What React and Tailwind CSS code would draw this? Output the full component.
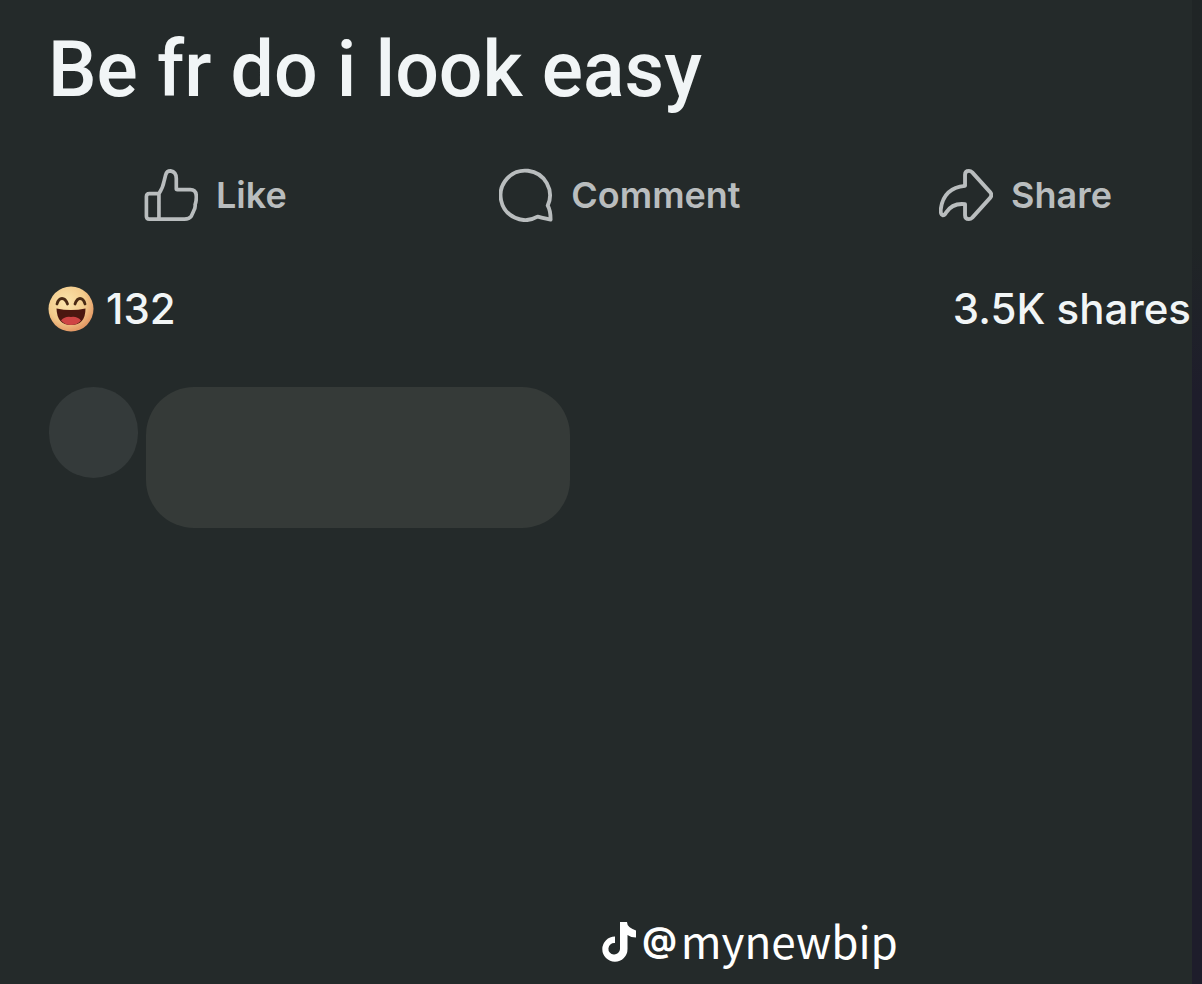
import React from 'react';

const LikeIcon = () => (
  <svg viewBox="0 0 56 56" className="w-[54px] h-[54px] shrink-0" fill="none" stroke="currentColor" strokeWidth="3.8" strokeLinejoin="round" strokeLinecap="round" aria-hidden="true">
    <path d="M15.5 26.500H5.500Q2.500 26.500 2.500 29.500V50Q2.500 53 5.500 53H42Q47 53 49 50L51.500 44.500Q53.500 41 53 38Q54.500 34 54.200 29Q54 22.500 48 22.500H34.500Q33.500 22.500 33.500 21.500V11Q33.500 4 27.500 3Q23.500 3 22.500 7L21 13Q19.500 21 15.500 26.500V53" />
  </svg>
);

const CommentIcon = () => (
  <svg viewBox="0 0 56 56" className="w-[54px] h-[54px] shrink-0" fill="none" stroke="currentColor" strokeWidth="4" strokeLinejoin="round" aria-hidden="true">
    <path d="M50.500 39A25.600 25.600 0 1 0 40 50.500Q43.500 51.500 53.500 53.500Q53.500 44 50.500 39Z" />
  </svg>
);

const ShareIcon = () => (
  <svg viewBox="0 0 56 56" className="w-[54px] h-[54px] shrink-0" fill="none" stroke="currentColor" strokeWidth="4" strokeLinejoin="round" aria-hidden="true">
    <path d="M27 18.500V7Q27 3 31 3Q33 3 34.500 4.500L53 25Q55.500 28 53 31L34.500 51.500Q33 53 31 53Q27 53 27 49V37.500Q14 36 7.500 46Q6 49 4 49Q1.500 48.500 1.800 43Q4.500 20.500 27 18.500Z" />
  </svg>
);

const HahaIcon = () => (
  <svg viewBox="0 0 46 46" className="w-[46px] h-[46px] shrink-0" role="img" aria-label="Haha">
    <defs>
      <radialGradient id="face" cx="0.4" cy="0.35" r="0.65">
        <stop offset="0" stopColor="#fbe5ac" />
        <stop offset="0.65" stopColor="#f3cb8c" />
        <stop offset="1" stopColor="#e49a66" />
      </radialGradient>
    </defs>
    <circle cx="23" cy="23" r="22.5" fill="url(#face)" />
    <path d="M9 18Q10.500 12.500 14 12.500Q17.500 12.500 19.500 18M27 18Q29 12.500 32 12.500Q35.500 12.500 37 18" fill="none" stroke="#4a2a14" strokeWidth="2.8" strokeLinecap="round" />
    <path d="M8.500 22.500Q23 25.500 37.500 22.500Q37.500 39 23 39Q9 39 8.500 22.500Z" fill="#4b1710" />
    <path d="M13 34.500Q17 30 23 31Q29 30 33 34.500Q29 39 23 39Q17 39 13 34.500Z" fill="#cf4444" />
  </svg>
);

const TikTokIcon = () => (
  <svg viewBox="0 0 34 40" className="mt-1 h-10 w-[34px] shrink-0" fill="#fff" aria-hidden="true">
    <path d="M18 0H25Q25 5.500 34 8.500V15.500Q29 15.500 25.500 13V27A12.600 12.600 0 1 1 13 14.500V21A5.800 5.800 0 1 0 18 27Z" />
  </svg>
);

const actions = [
  { label: 'Like', icon: LikeIcon, spacing: 'pr-3.5' },
  { label: 'Comment', icon: CommentIcon, spacing: '' },
  { label: 'Share', icon: ShareIcon, spacing: '' },
];

const App = () => {
  return (
    <div className="flex min-h-screen bg-[#242a2a] font-['Inter',sans-serif] text-[#f1f5f6]">
      <main className="flex flex-1 flex-col pt-6 pb-3.5">
        <h1 className="pl-12 font-['Roboto',sans-serif] text-[77px] leading-[92px] font-medium">Be fr do i look easy</h1>

        <div className="mt-[52px] flex justify-between pl-36 pr-20 text-[#b9bdbe]">
          {actions.map(({ label, icon: Icon, spacing }) => (
            <button key={label} type="button" className={`flex items-center gap-[18px] text-4xl leading-[54px] font-semibold ${spacing}`}>
              <Icon />
              {label}
            </button>
          ))}
        </div>

        <div className="mt-[62px] flex items-center justify-between pl-12 pr-px text-[42px] leading-[50px] font-medium">
          <span className="flex items-center gap-3">
            <HahaIcon />
            132
          </span>
          <span>3.5K shares</span>
        </div>

        {/* comment placeholder */}
        <div className="mt-[53px] flex items-start gap-2 pl-[49px]">
          <div className="h-[91px] w-[89px] rounded-full bg-[#343a3a]" />
          <div className="h-[141px] w-[424px] rounded-[48px] bg-[#353a38]" />
        </div>

        <div className="mt-auto flex items-center self-center pl-[308px] text-white">
          <TikTokIcon />
          <span className="flex items-center font-['Noto_Sans_CJK_SC',sans-serif] text-[44px] leading-[60px]">
            <span className="pl-1.5 pr-1 font-['Inter',sans-serif] text-[34px] font-bold">@</span>mynewbip
          </span>
        </div>
      </main>
      <div className="w-2.5 bg-linear-to-b from-[#202526] from-25% to-[#1e1d2b] to-40%" />
    </div>
  );
};

export default App;
